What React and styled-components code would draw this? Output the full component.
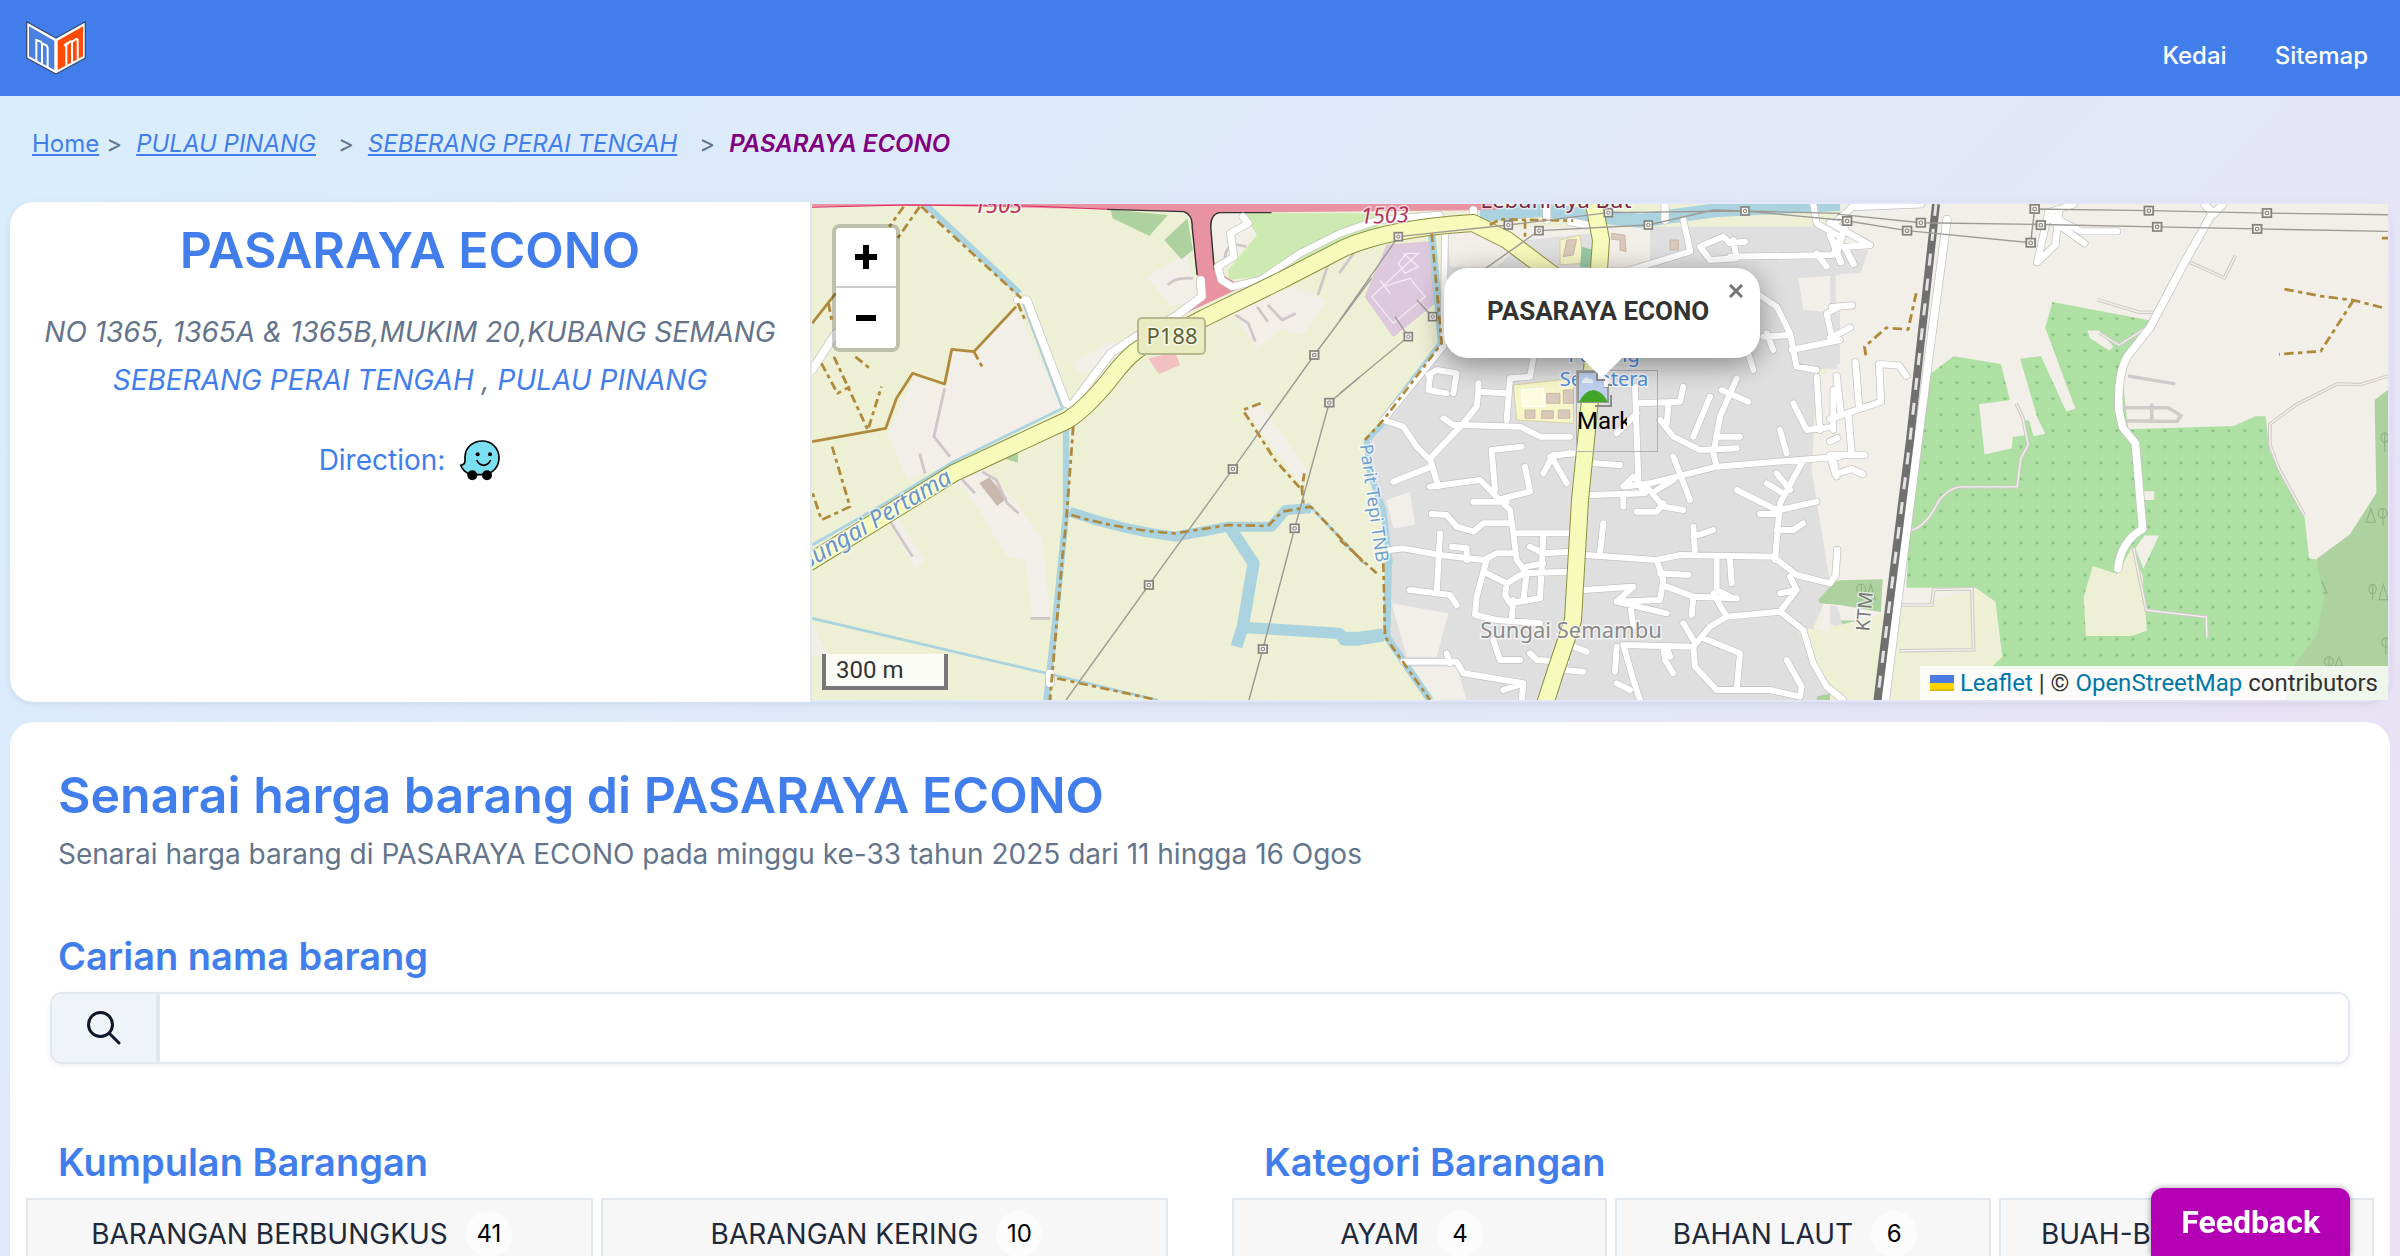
import styled, {createGlobalStyle, css} from 'styled-components';

const groups = [
  {name: 'BARANGAN BERBUNGKUS', count: 41},
  {name: 'BARANGAN KERING', count: 10},
];

const categories = [
  {name: 'AYAM', count: 4},
  {name: 'BAHAN LAUT', count: 6},
  {name: 'BUAH-BUAHAN', count: 8},
];

export default function App() {
  return (
    <>
      <GlobalStyle />
      <Header>
        <a href="#home" aria-label="Home">
          <Logo />
        </a>
        <Nav>
          <NavLink href="#kedai">Kedai</NavLink>
          <NavLink href="#sitemap">Sitemap</NavLink>
        </Nav>
      </Header>
      <Breadcrumb aria-label="Breadcrumb">
        <Crumb>
          <a href="#home">Home</a>
        </Crumb>
        <Crumb $italic>
          <a href="#pulau-pinang">PULAU PINANG</a>
        </Crumb>
        <Crumb $italic>
          <a href="#seberang-perai-tengah">SEBERANG PERAI TENGAH</a>
        </Crumb>
        <Crumb $italic $current>
          PASARAYA ECONO
        </Crumb>
      </Breadcrumb>
      <main>
        <StoreCard>
          <StoreInfo>
            <StoreName>PASARAYA ECONO</StoreName>
            <Address>
              NO 1365, 1365A &amp; 1365B,MUKIM 20,KUBANG SEMANG
              <br />
              <a href="#seberang-perai-tengah">SEBERANG PERAI TENGAH</a> ,{' '}
              <a href="#pulau-pinang">PULAU PINANG</a>
            </Address>
            <Direction href="#waze">
              Direction:
              <WazeIcon />
            </Direction>
          </StoreInfo>
          <StoreMap />
        </StoreCard>
        <PriceCard>
          <Intro>
            <Title>Senarai harga barang di PASARAYA ECONO</Title>
            <Subtitle>
              Senarai harga barang di PASARAYA ECONO pada minggu ke-33 tahun 2025 dari 11 hingga 16
              Ogos
            </Subtitle>
          </Intro>
          <SectionTitle as="label" htmlFor="search">
            Carian nama barang
          </SectionTitle>
          <SearchBox>
            <SearchButton aria-label="Cari">
              <SearchIcon />
            </SearchButton>
            <SearchInput id="search" type="text" />
          </SearchBox>
          <Columns>
            <FilterList title="Kumpulan Barangan" items={groups} />
            <FilterList title="Kategori Barangan" items={categories} />
          </Columns>
        </PriceCard>
      </main>
      <FeedbackButton>Feedback</FeedbackButton>
    </>
  );
}

function FilterList({title, items}) {
  return (
    <section>
      <SectionTitle>{title}</SectionTitle>
      <Filters>
        {items.map(({name, count}) => (
          <FilterButton key={name}>
            {name}
            <Count>{count}</Count>
          </FilterButton>
        ))}
      </Filters>
    </section>
  );
}

function StoreMap() {
  return (
    <MapFrame>
      <MapDrawing />
      <Marker>
        <BrokenImage />
        <span>Marker</span>
      </Marker>
      <Popup>
        PASARAYA ECONO
        <PopupClose aria-label="Close popup">
          <svg width="14" height="14" viewBox="0 0 14 14" stroke="#757575" strokeWidth="3">
            <path d="M1 1 13 13M13 1 1 13" />
          </svg>
        </PopupClose>
      </Popup>
      <ZoomControl>
        <ZoomButton aria-label="Zoom in">
          <svg width="22" height="24" viewBox="0 0 22 24">
            <path d="M8 0h6v9h8v6h-8v9H8v-9H0V9h8z" />
          </svg>
        </ZoomButton>
        <ZoomButton aria-label="Zoom out">
          <svg width="20" height="6" viewBox="0 0 20 6">
            <path d="M0 0h20v6H0z" />
          </svg>
        </ZoomButton>
      </ZoomControl>
      <Scale>300 m</Scale>
      <Attribution>
        <svg width="24" height="16" viewBox="0 0 24 16">
          <path fill="#4c7be1" d="M0 0h24v8H0z" />
          <path fill="#ffd500" d="M0 8h24v6H0z" />
          <path fill="#e0bc00" d="M0 14h24v2H0z" />
        </svg>
        <a href="#leaflet">Leaflet</a> | © <a href="#openstreetmap">OpenStreetMap</a> contributors
      </Attribution>
    </MapFrame>
  );
}

function Logo() {
  return (
    <svg width="60" height="54" viewBox="78 60 180 162" display="block">
      <path d="M80 62 168 111 256 62V171L168 219 80 171Z" fill="#fff" stroke="#3d4f78" strokeWidth="4" />
      <path d="M87 76 163 119V207L87 166Z" fill="#4a80e0" />
      <path d="M249 76 173 119V207L249 166Z" fill="#ff4a08" />
      <path
        d="M109 180V117L122 122Q126 124 126 130V188M126 128 137 132Q143 135 143 142V198M199 194V128L192 134M199 132 210 122Q216 119 216 126V184M216 122 227 115Q233 112 233 118V174"
        fill="none"
        stroke="#fff"
        strokeWidth="6"
      />
    </svg>
  );
}

function SearchIcon() {
  return (
    <svg width="34" height="34" viewBox="0 0 34 34" fill="none" stroke="currentColor" strokeWidth="3" strokeLinecap="round">
      <circle cx="13.5" cy="13.5" r="12" />
      <path d="M22.5 22.5 32 32" />
    </svg>
  );
}

function WazeIcon() {
  return (
    <svg width="42" height="42" viewBox="94 56 126 126">
      <path
        d="M164 62C138 62 113 80 112 109V122Q112 133 99 135Q105 152 127 163H168C196 160 214 140 214 112C214 84 192 62 164 62Z"
        fill="#7bdff2"
        stroke="#000"
        strokeWidth="5"
      />
      <circle cx="134" cy="165" r="15" />
      <circle cx="178" cy="165" r="15" />
      <circle cx="150" cy="102" r="6" />
      <circle cx="187" cy="102" r="6" />
      <path d="M148 121Q155 134 168 135Q181 134 188 121" fill="none" stroke="#000" strokeWidth="5" strokeLinecap="round" />
    </svg>
  );
}

function BrokenImage() {
  return (
    <svg width="36" height="36" viewBox="0 0 36 36">
      <path d="M1 1H20V8H28V16H31V31H1Z" fill="#c0d0f0" stroke="#999" strokeWidth="2" />
      <path d="M2 31Q8 19 17 19Q25 20 31 31Z" fill="#42a728" />
      <path d="M5 11Q8 4 12 8Q17 8 16 12H5Z" fill="#eef3fb" />
      <path d="M20 1V8H27V16H31L33 8Z" fill="#fff" />
      <path d="M20 2V9H28M31 14H35M18 35H34V24" fill="none" stroke="#8b8b8b" strokeWidth="2" />
    </svg>
  );
}

// Each sheet of the map is drawn in its own units
const WEST = 'translate(800 190) scale(.35714 .33333)';
const CENTER = 'translate(1340 190) scale(.33333)';
const EAST = 'translate(1830 190) scale(.36352 .34439)';

const westTracks = `M340 50 620 325M765 710 745 1000 735 1100 700 1530M760 975Q900 1020 1050 1030
  L1200 1005 1310 1008 1350 965 1430 950 1580 1120M720 1465 1000 1530M1290 640 1240 660 1330 810 1405 900
  1412 850M1405 890 1410 950M290 50 250 110M335 50 270 150M95 500 190 720 228 590M60 520 105 610 140 590
  M155 500 195 535M90 770 140 950 60 990 34 905M487 485 515 540M80 340 90 400M610 340 632 395`;

const centerTracks = `M275 130 305 460 130 690 75 750M0 1050 110 1150M130 1120 135 1340 270 1530
  M450 105 480 88 700 92M555 90V150`;

const eastTracks = `M237 300 215 405 155 400 95 455 100 490M1250 288 1350 308 1440 320 1525 343
  M1440 320 1350 468 1235 477M1518 140H1540`;

const streets = `M315 130 310 460M310 470 130 690M1030 90 1050 180M1090 165 1150 140 1170 160 1215 155
  M1080 170 1110 210 1190 205 1180 150M870 240 1050 185M1170 200 1480 195 1500 140 1430 100 1420 42
  M1430 190 1460 230M1250 310 1310 350 1350 430 1370 530 1430 540M1355 480 1500 450M1270 440 1350 435
  M1280 430 1300 480M1500 350 1460 370 1475 440M1210 440 1240 540M580 505 570 560 510 565 500 690
  M500 610 415 605 410 650 370 700 270 805 295 890M415 580V610M130 690 190 710 230 770 270 810M310 685 340 705
  370 705 540 710 600 740 690 740M265 555 290 540 350 550 340 610M270 560 265 600 320 610M275 830 160 875
  M270 890 420 870 470 920 510 960 520 1030 530 1110M465 900 455 780 545 770M555 830 570 905 490 925
  M400 935H500M275 972 320 975 350 1010 400 1025 430 1000 510 1000M520 1030H700M710 790 640 795 610 850
  M630 800 690 790M640 810 680 880M885 590 895 870M895 640 1020 635 1030 590M890 670 830 730M960 690 1000 740
  1080 780 1190 775M985 650 980 700M1110 620 1060 740M1190 565 1140 680 1120 790 1130 830M1145 600 1225 635
  M1140 740H1200M850 890 930 880 1130 830 1500 800M1000 800 1050 930M890 870 915 910 750 915M850 920V950
  M880 860 850 890M920 890 970 950 1030 960M970 940 950 965 890 965M950 900 1000 870M760 820 840 825
  M1390 810 1320 940 1305 1110M1190 900 1310 960M1280 880 1330 910M1310 850 1350 900M1260 972H1310M1320 960 1430 935
  M1310 1020 1360 1020 1390 1000M1480 800 1490 860M150 1080 190 1075 300 1095 430 1110 470 1090 520 1090
  M300 1030 290 1210M210 1200 330 1215 350 1245M335 1070 380 1075V1110M440 1110 410 1220 405 1275 470 1290 600 1300
  M430 1145 500 1180 550 1150 690 1145M500 1180 495 1215 510 1240 600 1225 610 1040M520 1230 515 1290
  M570 1070 610 1090 690 1085M530 1110 560 1150 550 1230M560 1130 610 1120M790 1000 780 1090M735 1095 950 1110
  1020 1095 1300 1100 1370 1155 1470 1180M1060 1010 1065 1090M1060 1040 1120 1020M950 1110 970 1170 960 1230 830 1235
  880 1190 730 1200M830 1235 980 1270M870 1240 880 1310M960 1150 1045 1155M980 1190 1060 1220 1190 1225M1060 1220 1055 1275
  M1130 1110V1200L1180 1225M1170 1110 1175 1180M1120 1210 1160 1280 1320 1265 1370 1200 1350 1160M1370 1200 1320 1210
  M1160 1280 1110 1310 1060 1370 850 1365M1030 1300 1060 1350M1320 1265 1390 1320 1420 1420 1460 1490 1500 1520
  M1060 1370 1065 1430 1130 1500 1190 1500 1200 1390 1090 1345M1200 1500H1290L1380 1520 1385 1490 1340 1410
  M850 1365 880 1470 900 1530M830 1370 825 1445M970 1370 975 1410 1000 1450M980 1370 990 1400M830 1480 870 1500
  M460 1350 480 1410 540 1410M570 1390 590 1410 680 1415M190 1415 350 1415 370 1450 550 1480 545 1530
  M320 1390 330 1420M670 1440 730 1445M700 1370 740 1385M490 1500 550 1480M1320 720 1340 790M1360 640 1400 720
  1480 710M1430 560 1440 720M1480 600V720`;

const eastStreets = `M0 95 110 160 40 165 65 215M20 90 60 50 250 42M0 130 30 210M40 110 20 180M600 70 690 120 790 120
  M600 70 570 210 620 160 630 60M600 80 700 155M600 65 670 42M5 340 60 335M0 430 55 400M70 500 80 630M18 540 30 650
  M0 665 140 615 135 505 190 510 210 540M50 650 60 770M0 770H95M0 730 20 720M5 790 15 825 60 810 90 825M20 1045 15 1120 0 1140
  M0 1450 35 1480`;

function MapDrawing() {
  return (
    <MapSvg viewBox="812 204 1576 496" preserveAspectRatio="xMidYMid slice">
      <defs>
        <pattern id="orchard" x="239" y="630" width="44" height="46.5" patternUnits="userSpaceOnUse">
          <rect width="44" height="46.5" fill="#aedfa3" />
          <circle cx="22" cy="23" r="4" fill="#7fbf7a" />
        </pattern>
      </defs>
      <path fill="#edf0d5" d="M812 204H2388V700H812Z" />

      <g transform={WEST} fill="#f2efe9">
        <path d="M245 730 320 560 405 590 425 480 487 485 605 350 735 655 430 820 300 870Z" />
        <path d="M300 880 430 850 520 840 600 930 680 1050 700 1290 650 1280 630 1110 580 1100 460 890Z" />
        <path d="M760 520 870 455 940 470 790 555ZM970 260 1080 190 1100 260 1120 330 1040 350Z" />
        <path d="M1150 70H1245L1280 130 1190 240 1150 180ZM1210 360 1380 290 1475 330 1410 435 1345 420 1280 480Z" />
        <path d="M1245 660 1290 640 1420 840 1400 880ZM245 990 275 985 350 1110 325 1140ZM34 1300 80 1400H34Z" />
        <path fill="#aed1a0" d="M870 58 1030 75 978 138 875 85ZM1020 150 1085 85 1100 180 1068 208ZM570 805 610 790V818Z" />
        <path fill="#cdebb0" d="M1240 70H1620V115L1290 260 1200 270V240L1280 135Z" />
        <path fill="#c8b8ad" d="M502 880 530 862 580 925 552 948Z" />
        <path fill="#f2c0c0" d="M975 505 1050 488 1065 525 1005 552Z" />
      </g>

      <g transform={CENTER}>
        <path fill="#e0dfdf" d="M320 110H1560V520L1430 540 1415 840 1480 1180 1420 1310 1500 1530H290L140 1340 150 1120 75 750 320 460Z" />
        <path fill="#f2efe9" d="M1500 42H3200V1530H1500L1430 1310 1470 1180 1415 840 1440 560 1500 520ZM1375 265 1510 255V370L1390 360Z" />
        <path fill="#f2efe9" d="M320 110H700L930 110V230H800L760 130 560 150 470 230H330ZM140 930 210 905 225 1005 160 1015ZM155 1240 325 1270 290 1400 200 1400ZM205 1430 350 1430 380 1530H290Z" />
        <path fill="#edf0d5" d="M1370 1310 1500 1330V1530L1440 1480Z" />
        <path fill="#aed1a0" d="M1435 1230 1470 1190 1500 1175V1245L1440 1240ZM1430 1520 1470 1510 1500 1530H1430Z" />
        <path fill="#ddc8dd" stroke="#c9b0c9" d="M140 165 265 155 285 340 160 440 75 320Z" />
        <path fill="none" stroke="#f4eaf4" strokeWidth="4" d="M95 320 235 190 200 190 175 220 195 250 235 230 190 190M130 290 210 265 255 320 160 400 95 320M120 270 150 310" />
        <path fill="#f7f6c9" stroke="#d9cfa5" strokeWidth="3" d="M520 585 700 565V700L530 690ZM660 150 720 135 730 220 660 225Z" />
        <path fill="#d9c9bb" stroke="#bca899" strokeWidth="2" d="M620 610H660V640H620ZM670 600H700V640H670ZM555 660H585V685H555ZM605 662H640V685H605ZM655 660H690V685H655ZM990 150H1015V180H990ZM815 130 855 135 858 185 840 180V150L815 148ZM680 150 710 148 700 195 670 200Z" />
        <path fill="#fdfbe0" stroke="#fff" strokeWidth="4" d="M545 600 610 595 615 650 550 650Z" />
        <path fill="#98c9a3" d="M725 170 760 180 750 232H720Z" />
      </g>

      <g transform={EAST}>
        <path fill="#e0dfdf" d="M0 170 105 175 85 240 0 245ZM0 240H15L20 520H0ZM0 1205 20 1210 40 1280 0 1260Z" />
        <path fill="#aed1a0" d="M25 1133 145 1130 140 1225 0 1200V1145ZM30 1250H90V1262H35ZM1535 580 1498 610 1503 880 1430 1000 1340 1070 1250 1500H1540Z" />
        <path fill="#edf0d5" d="M0 1270 150 1230 470 1140V1380L420 1490H0Z" />
        <path
          fill="url(#orchard)"
          d="M340 483 470 505 495 610 410 622 425 768 500 750 503 718 535 712 530 668 548 670 560 715 592 708 570 660 523 490 580 482 650 643 675 635 592 400 612 325 885 380 800 500 820 695 1110 685 1170 657 1198 657 1210 760 1305 945 1318 1070 1338 1072 1360 1180 1340 1290 1270 1390H440L474 1355 455 1195 400 1155H210L215 1050 268 540Z"
        />
        <path fill="#edf0d5" d="M723 1092 790 1115 830 1040 860 1120 872 1280 830 1295H704L698 1180Z" />
        <path fill="#f2efe9" d="M708 408 740 408 780 455 768 466 715 430ZM865 1003H905L862 1100 840 1040ZM864 875H892V900H864Z" />
        <path fill="none" stroke="#8db382" strokeWidth="3" d="M85 1145a12 14 0 1 0 1 0V1190M100 1190 112 1145 125 1190ZM1520 925a12 14 0 1 0 1 0V975M1475 965 1488 925 1500 965ZM1492 1145a10 14 0 1 0 1 0V1190M1510 1190 1522 1145 1535 1190ZM1372 1355a12 14 0 1 0 1 0V1382M1390 1382 1400 1355 1410 1382ZM1528 1300a10 14 0 1 0 1 0V1350M1352 1135 1368 1170H1355M1525 705a10 14 0 1 0 1 0V760" />
      </g>

      <g fill="none" stroke="#aad3df" strokeWidth="14" strokeLinejoin="round">
        <g transform={WEST}>
          <path d="M350 42 615 310M745 700V970L715 1290 690 1530" strokeWidth="18" />
          <path d="M622 330 735 655 430 815 230 945 34 1065M34 1285 690 1450 1000 1530M1430 950 1580 1120" strokeWidth="8" />
          <path d="M755 965Q900 1020 1050 1040L1200 1010H1320L1360 960 1430 955" strokeWidth="30" />
          <path d="M1205 1015 1270 1120 1240 1310 1222 1370M1240 1312 1510 1330 1525 1350 1570 1350" strokeWidth="34" />
        </g>
        <g transform={CENTER}>
          <path d="M0 1345 60 1345 130 1335" strokeWidth="40" />
          <path d="M275 130 305 460 130 690M145 1115 140 1340 270 1530" strokeWidth="22" />
          <path d="M130 700 80 750 90 850 130 960 150 1120" strokeWidth="18" />
          <path d="M420 75 600 60 900 92 1130 60 1500 42" strokeWidth="42" />
        </g>
      </g>

      <g fill="none" stroke="#cfc6c9" strokeWidth="8">
        <path transform={WEST} d="M405 595 375 740 420 800M335 790 350 850M455 870 490 910M250 990 315 1100M510 845 550 870 580 940 612 970M1030 285Q1050 260 1100 265M1220 375 1255 400 1275 455M1280 350 1310 395M1310 345 1350 390 1388 370M1480 220 1450 315M1550 190 1510 250M645 1285H700M1190 210Q1190 160 1230 165L1250 170" />
        <path transform={EAST} stroke="#cfcbc9" strokeWidth="10" d="M218 990Q260 980 290 920T370 862L515 862 525 780 545 740 530 660 512 620M1535 540 1460 565 1395 563 1280 625 1210 680V740L1235 810 1305 945M835 1040 870 1220 1035 1240 1037 1300M195 1205H280L285 1160 390 1158 395 1335 190 1338M740 415 795 450 870 400M735 318 850 355 900 355M990 210 1085 255 1115 190M820 540 950 563M805 632H930L965 655 955 672 810 670M885 620V670" />
      </g>
      <path transform={EAST} fill="none" stroke="#f2efe9" strokeWidth="4" d="M218 990Q260 980 290 920T370 862L515 862 525 780 545 740 530 660 512 620M1535 540 1460 565 1395 563 1280 625 1210 680V740L1235 810 1305 945M835 1040 870 1220 1035 1240 1037 1300M195 1205H280L285 1160 390 1158 395 1335 190 1338M740 415 795 450 870 400M735 318 850 355 900 355M990 210 1085 255 1115 190" />

      {/* trunk road */}
      <g transform={WEST}>
        <path fill="#e892a2" d="M34 42H1950V60L1170 68Q1150 72 1150 110L1160 240 1240 290 1080 370 1135 320 1110 250 1098 110Q1100 75 1075 65L860 58 300 46 34 50Z" />
        <path fill="none" stroke="#dc2a67" strokeWidth="3" d="M34 52 300 45 640 48 860 58" />
        <path fill="none" stroke="#333" strokeWidth="4" d="M860 58 1075 65Q1100 75 1098 110L1112 255M1160 240 1150 110Q1150 72 1175 68H1320" />
      </g>

      {[
        ['#c4c1c1', 4],
        ['#fff', 0],
      ].map(([stroke, extra]) => (
        <g key={stroke} fill="none" stroke={stroke} strokeLinecap="round" strokeLinejoin="round">
          <g transform={CENTER}>
            <path d={streets} strokeWidth={18 + extra} />
            <path d="M400 60V100M620 50V90M975 42V90M690 95 740 105" strokeWidth={22 + extra} />
          </g>
          <g transform={EAST}>
            <path d={eastStreets} strokeWidth={18 + extra} />
            <path d="M322 85 270 500 200 1080 150 1500M1050 70 970 220 880 400 820 480Q790 530 795 640L805 690 840 735 860 985Q800 1020 792 1100M1030 42 1055 70 1080 42" strokeWidth={21 + extra} />
          </g>
          <g transform={WEST}>
            <path d="M1240 80 1255 100 1205 130 1215 200 1170 230 1180 270 1210 290 1290 270 1400 190 1512 130 1620 90 1790 75" strokeWidth={20 + extra} />
            <path d="M765 640 870 490 940 440 1050 380 1125 320 1122 270M765 650 745 640 635 330 610 330M34 540 100 430M700 1450V1480" strokeWidth={22 + extra} />
          </g>
        </g>
      ))}

      {[
        ['#8c9140', 2],
        ['#f6fabb', 0],
      ].map(([stroke, extra]) => (
        <g key={stroke} fill="none" stroke={stroke} strokeLinejoin="round">
          <path d="M808 563 954 473 1068 420Q1090 405 1114 374T1152 345L1204 318 1282 280 1344 248Q1390 228 1473 223L1507 240 1560 280" strokeWidth={16 + extra} />
          <path d="M1594 204 1601 240 1590 400 1580 500 1573 620 1556 670 1545 704" strokeWidth={16 + extra} />
        </g>
      ))}

      <g fill="none" stroke="#b08a3c" strokeWidth="8" strokeLinejoin="round">
        <path transform={WEST} d="M34 755 240 715 270 625 315 550 405 582 425 478 487 485 605 350M34 400 100 310" />
        <g strokeDasharray="26 12 12 12">
          <path transform={WEST} d={westTracks} />
          <path transform={CENTER} d={centerTracks} />
          <path transform={EAST} d={eastTracks} />
        </g>
      </g>

      <g fill="none">
        <path d="M1936 204 1910 440 1877 704" stroke="#707070" strokeWidth="8" />
        <path d="M1936 204 1910 440 1877 704" stroke="#e4e4e4" strokeWidth="3" strokeDasharray="12 13" />
      </g>

      <g fill="none" stroke="#9d9a95" strokeWidth="4">
        <path transform={WEST} d="M1600 265 1440 495 1212 837 977 1185 745 1530M1568 560 1482 638 1385 1015 1296 1377 1257 1530" />
        <path transform={CENTER} d="M0 390 175 140 505 105 805 68 1215 63 1500 90M0 610 205 440 165 380M278 380 230 330M430 240 597 122 925 105 1120 60 1215 63 1500 70" />
        <path transform={EAST} d="M20 70 250 95 580 100 900 107 1175 113 1535 120M20 85 212 118 552 153 563 55 877 60 1202 67 1535 72" />
      </g>
      <Pylons transform={WEST} points={[[1440, 495], [1482, 638], [1212, 837], [1385, 1015], [977, 1185], [1296, 1377]]} />
      <Pylons transform={CENTER} points={[[175, 140], [278, 380], [205, 440], [505, 105], [597, 122], [805, 68], [925, 105], [1215, 63]]} />
      <Pylons transform={EAST} points={[[47, 90], [212, 118], [250, 95], [552, 153], [580, 102], [563, 55], [877, 60], [900, 107], [1202, 67], [1175, 113]]} />

      <rect x="1138" y="318" width="67" height="36" rx="4" fill="#e9ecc0" stroke="#b4b88c" strokeWidth="2" />
      <MapLabel x="1172" y="344" $size={22} $color="#5c6136">P188</MapLabel>
      <MapLabel x="998" y="213" $size={22} $color="#b8325a" $italic>1503</MapLabel>
      <MapLabel x="1385" y="223" $size={22} $color="#b8325a" $italic transform="rotate(-2 1385 223)">1503</MapLabel>
      <MapLabel x="1556" y="208" $size={22} $color="#7a2840">Lebuhraya But</MapLabel>
      <MapLabel x="880" y="526" $size={24} $color="#6a95c8" $italic transform="rotate(-31 880 526)">Sungai Pertama</MapLabel>
      <MapLabel x="1368" y="504" $size={18} $color="#6f9fd0" transform="rotate(82 1368 504)">Parit Tepi TNB</MapLabel>
      <MapLabel x="1571" y="638" $size={22} $color="#8a8a8a">Sungai Semambu</MapLabel>
      <MapLabel x="1604" y="362" $size={20} $color="#4f8ee0">Padang</MapLabel>
      <MapLabel x="1604" y="386" $size={20} $color="#4f8ee0">Sejahtera</MapLabel>
      <MapLabel x="1871" y="612" $size={19} $color="#777" transform="rotate(-85 1871 612)">KTM</MapLabel>
    </MapSvg>
  );
}

function Pylons({points, transform}) {
  return (
    <g transform={transform}>
      {points.map(([x, y]) => (
        <g key={`${x}-${y}`}>
          <rect x={x - 12} y={y - 12} width="24" height="24" fill="#f3f1ec" stroke="#85827e" strokeWidth="5" />
          <circle cx={x} cy={y} r="5" fill="none" stroke="#85827e" strokeWidth="3" />
        </g>
      ))}
    </g>
  );
}

const GlobalStyle = createGlobalStyle`
  * {
    box-sizing: border-box;
  }

  body {
    margin: 0;
    min-height: 100vh;
    background: linear-gradient(135deg, #d8eefd 0%, #e4e5f8 65%, #ecdff3 100%);
    color: #64748b;
    font-family: Inter, sans-serif;
    font-size: 24px;
    overflow-x: hidden;
  }

  a {
    color: #427eeb;
  }

  button {
    border: none;
    padding: 0;
    cursor: pointer;
  }
`;

const blueHeading = css`
  margin: 0;
  color: #427eeb;
  font-weight: 600;
`;

const Header = styled.header`
  display: flex;
  justify-content: space-between;
  align-items: center;
  height: 96px;
  padding: 0 32px 0 26px;
  background: #427eeb;
`;

const Nav = styled.nav`
  display: flex;
  gap: 48px;
  padding-top: 14px;
`;

const NavLink = styled.a`
  color: white;
  font-weight: 500;
  text-decoration: none;
`;

const Breadcrumb = styled.nav`
  display: flex;
  height: 106px;
  padding: 32px;
  line-height: 32px;
`;

const Crumb = styled.span`
  ${({$italic}) => $italic && 'font-style: italic;'}
  ${({$current}) => $current && 'color: purple; font-weight: 600;'}

  &:not(:first-child)::before {
    content: '>';
    display: inline-block;
    margin: 0 14px 0 22px;
    color: #64748b;
    font-style: normal;
    font-weight: 400;
  }

  &:nth-child(2)::before {
    margin-left: 7px;
  }
`;

const StoreCard = styled.section`
  display: grid;
  grid-template-columns: 401fr 789fr;
  min-height: 500px;
  margin: 0 10px 20px;
  border-radius: 24px;
  box-shadow: 0 2px 6px rgba(100, 116, 139, 0.15);
`;

const StoreInfo = styled.div`
  display: flex;
  flex-direction: column;
  align-items: center;
  padding: 16px 24px;
  border-right: 2px solid #e2e8f0;
  border-radius: 24px 0 0 24px;
  background: white;
  text-align: center;
`;

const StoreName = styled.h2`
  ${blueHeading}
  font-size: 50px;
  line-height: 64px;
`;

const Address = styled.address`
  margin-top: 26px;
  font-size: 28px;
  line-height: 48px;

  a {
    text-decoration: none;
  }
`;

const Direction = styled.a`
  display: flex;
  align-items: center;
  gap: 14px;
  margin-top: 32px;
  font-size: 28px;
  line-height: 48px;
  text-decoration: none;
`;

const MapFrame = styled.div`
  position: relative;
  overflow: hidden;
  margin: 2px 2px 2px 0;
  font-family: Roboto, sans-serif;
`;

const MapSvg = styled.svg`
  position: absolute;
  width: 100%;
  height: 100%;
`;

const MapLabel = styled.text`
  font-family: 'Noto Sans', sans-serif;
  font-size: ${({$size}) => $size}px;
  font-style: ${({$italic}) => ($italic ? 'italic' : 'normal')};
  fill: ${({$color}) => $color};
  stroke: rgba(255, 255, 255, 0.6);
  stroke-width: 3px;
  paint-order: stroke;
  text-anchor: middle;
`;

const Marker = styled.div`
  position: absolute;
  left: 764px;
  top: 166px;
  width: 82px;
  height: 82px;
  border: 1px solid #b0b0b0;
  color: black;

  svg {
    display: block;
  }

  span {
    display: block;
    width: 50px;
    overflow: hidden;
    line-height: 28px;
  }
`;

const Popup = styled.div`
  position: absolute;
  left: 632px;
  top: 64px;
  width: 316px;
  padding: 24px 40px 28px 43px;
  border-radius: 24px;
  background: white;
  box-shadow: 0 6px 28px rgba(0, 0, 0, 0.4);
  color: #333;
  font-size: 26px;
  font-weight: 700;
  line-height: 38px;
  white-space: nowrap;

  &::after {
    content: '';
    position: absolute;
    left: 138px;
    top: 100%;
    border: 20px solid transparent;
    border-top-color: white;
    border-bottom: none;
  }
`;

const PopupClose = styled.button`
  position: absolute;
  right: 0;
  top: 0;
  width: 48px;
  height: 48px;
  background: none;
`;

const ZoomControl = styled.div`
  position: absolute;
  left: 20px;
  top: 20px;
  display: grid;
  border: 4px solid rgba(0, 0, 0, 0.2);
  border-radius: 8px;
  background-clip: padding-box;
`;

const ZoomButton = styled.button`
  display: flex;
  align-items: center;
  justify-content: center;
  width: 60px;
  height: 60px;
  border-radius: 0 0 4px 4px;
  background: white;

  &:first-child {
    border-bottom: 2px solid #ccc;
    border-radius: 4px 4px 0 0;
  }
`;

const Scale = styled.div`
  position: absolute;
  left: 10px;
  bottom: 10px;
  width: 126px;
  padding: 0 10px;
  border: 4px solid #777;
  border-top: none;
  background: rgba(255, 255, 255, 0.8);
  color: #333;
  line-height: 32px;
`;

const Attribution = styled.div`
  position: absolute;
  right: 0;
  bottom: 0;
  padding: 0 10px;
  background: rgba(255, 255, 255, 0.8);
  color: #333;
  line-height: 34px;

  a {
    color: #0078a8;
    text-decoration: none;
  }

  svg {
    margin-right: 6px;
  }
`;

const PriceCard = styled.section`
  padding: 40px 16px 16px;
  margin: 0 10px;
  border-radius: 24px 24px 0 0;
  background: white;
`;

const Intro = styled.div`
  padding-left: 32px;
`;

const Title = styled.h1`
  ${blueHeading}
  font-size: 50px;
  line-height: 66px;
`;

const Subtitle = styled.p`
  margin: 8px 0 56px;
  font-size: 28px;
  line-height: 36px;
`;

const SectionTitle = styled.h2`
  ${blueHeading}
  display: block;
  padding-left: 32px;
  font-size: 38px;
  line-height: 56px;
`;

const SearchBox = styled.div`
  display: flex;
  height: 72px;
  margin: 8px 24px 70px;
  border: 2px solid #e2e8f0;
  border-radius: 12px;
  overflow: hidden;
  box-shadow: 0 2px 4px rgba(100, 116, 139, 0.1);
`;

const SearchButton = styled.button`
  display: flex;
  align-items: center;
  justify-content: center;
  width: 108px;
  border-right: 4px solid #e2e8f0;
  background: #f0f4f9;
  color: #0f172a;
`;

const SearchInput = styled.input`
  flex: 1;
  padding: 0 24px;
  border: none;
  outline: none;
  font: inherit;
`;

const Columns = styled.div`
  display: grid;
  grid-template-columns: 1fr 1fr;
  gap: 64px;
`;

const Filters = styled.div`
  display: flex;
  gap: 8px;
  margin-top: 8px;
`;

const FilterButton = styled.button`
  display: flex;
  flex: 1;
  align-items: center;
  justify-content: center;
  height: 72px;
  border: 2px solid #e2e8f0;
  background: #f7f7f7;
  color: #1e293b;
  font-family: inherit;
  font-size: 28px;
`;

const Count = styled.span`
  width: 46px;
  margin: 0 16px 0 18px;
  border-radius: 50%;
  background: #fcfcfc;
  color: black;
  font-size: 24px;
  line-height: 46px;
`;

const FeedbackButton = styled.button`
  position: fixed;
  right: 50px;
  bottom: 0;
  height: 68px;
  padding: 0 30px;
  border-radius: 12px 12px 0 0;
  background: #b400b4;
  box-shadow: 0 0 6px rgba(0, 0, 0, 0.4);
  color: white;
  font-family: Roboto, sans-serif;
  font-size: 32px;
  font-weight: 700;
`;
